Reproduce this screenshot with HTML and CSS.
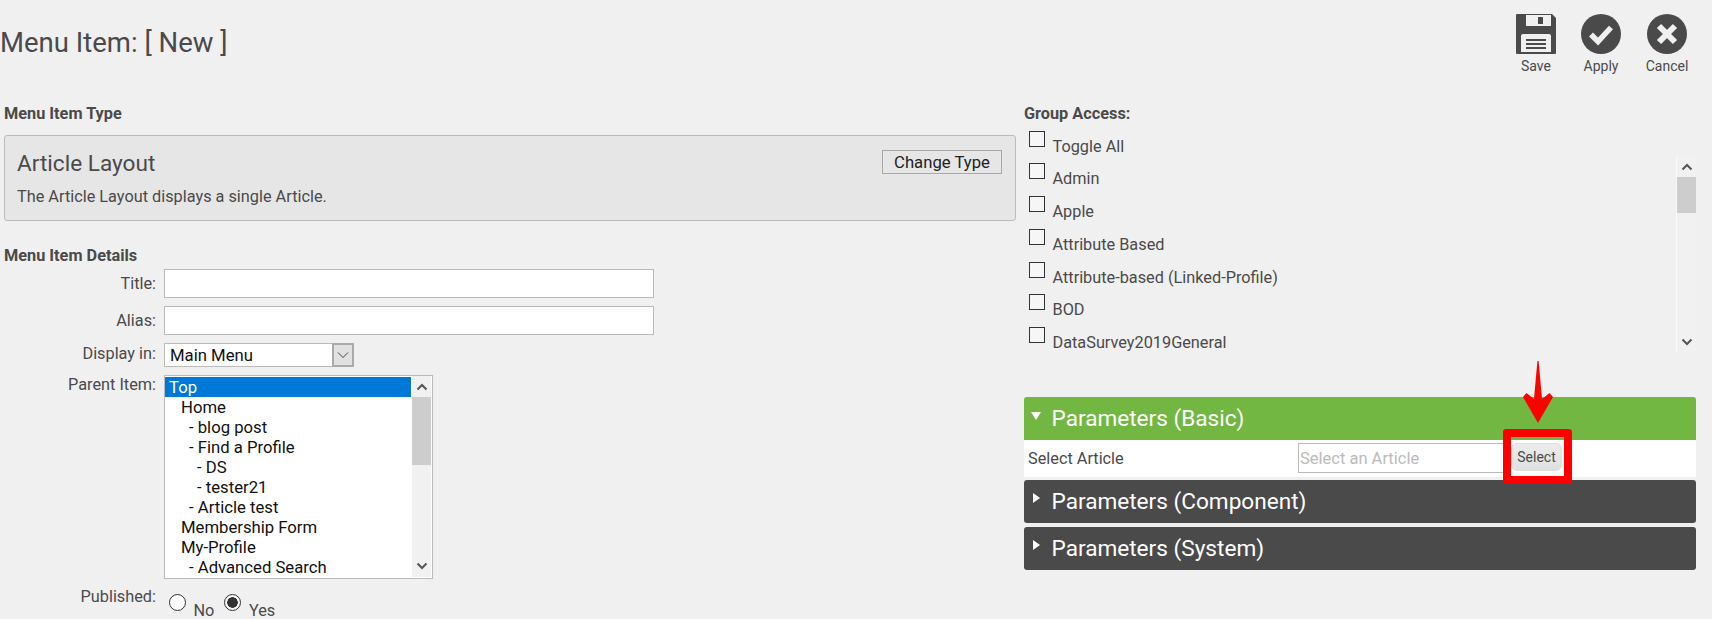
FILE: index.html
```html
<!DOCTYPE html>
<html lang="en">
<head>
  <meta charset="UTF-8">
  <title>Menu Item: [ New ]</title>
  <link rel="stylesheet" href="styles.css">
</head>
<body>

<header class="top">
  <h1>Menu Item: [ New ]</h1>
  <div class="toolbar">
    <a class="tool">
      <svg viewBox="0 0 40 40" width="40" height="40"><path fill="#4a4a4a" d="M1 0H36L40 4V39A1 1 0 0 1 39 40H1A1 1 0 0 1 0 39V1A1 1 0 0 1 1 0Z"/><path fill="#f0f0f0" d="M10 1H35V12H10Z"/><path fill="#4a4a4a" d="M22 3H27V10H22Z"/><path fill="#f0f0f0" d="M7 20H33A2 2 0 0 1 35 22V38H5V22A2 2 0 0 1 7 20Z"/><path fill="#4a4a4a" d="M10 25H30V27H10ZM10 29H30V31H10ZM10 33H30V35H10Z"/></svg>
      <span>Save</span>
    </a>
    <a class="tool">
      <svg viewBox="0 0 40 40" width="40" height="40"><circle cx="20" cy="20" r="20" fill="#4a4a4a"/><path fill="none" stroke="#f0f0f0" stroke-width="5.500" d="M10 20.500L17 27.500L30 13.500"/></svg>
      <span>Apply</span>
    </a>
    <a class="tool">
      <svg viewBox="0 0 40 40" width="40" height="40"><circle cx="20" cy="20" r="20" fill="#4a4a4a"/><path fill="none" stroke="#f0f0f0" stroke-width="6" d="M12 12L28 28M28 12L12 28"/></svg>
      <span>Cancel</span>
    </a>
  </div>
</header>

<main class="columns">
  <section class="left">
    <h4 class="sec first">Menu Item Type</h4>
    <div class="type-box">
      <div class="type-head">
        <h3>Article Layout</h3>
        <button class="change">Change Type</button>
      </div>
      <p>The Article Layout displays a single Article.</p>
    </div>

    <h4 class="sec details">Menu Item Details</h4>
    <div class="row r-title">
      <label>Title:</label>
      <input type="text" class="text-in">
    </div>
    <div class="row r-alias">
      <label>Alias:</label>
      <input type="text" class="text-in">
    </div>
    <div class="row r-display">
      <label>Display in:</label>
      <div class="fake-select">
        <span class="val">Main Menu</span>
        <span class="drop"><svg viewBox="0 0 12 8" width="12" height="8"><path fill="none" stroke="#444" d="M1 1.500L6 6.500L11 1.500"/></svg></span>
      </div>
    </div>
    <div class="row r-parent">
      <label>Parent Item:</label>
      <div class="listbox">
        <div class="options">
          <div class="opt sel">Top</div>
          <div class="opt l1">Home</div>
          <div class="opt l2">- blog post</div>
          <div class="opt l2">- Find a Profile</div>
          <div class="opt l3">- DS</div>
          <div class="opt l3">- tester21</div>
          <div class="opt l2">- Article test</div>
          <div class="opt l1">Membership Form</div>
          <div class="opt l1">My-Profile</div>
          <div class="opt l2">- Advanced Search</div>
        </div>
        <div class="sbar list-bar">
          <svg class="sb-up" viewBox="0 0 12 8" width="12" height="8"><path fill="none" stroke="#555" stroke-width="2" d="M1.500 6.500L6 2L10.500 6.500"/></svg>
          <div class="thumb"></div>
          <svg class="sb-down" viewBox="0 0 12 8" width="12" height="8"><path fill="none" stroke="#555" stroke-width="2" d="M1.500 1.500L6 6L10.500 1.500"/></svg>
        </div>
      </div>
    </div>
    <div class="row r-pub">
      <label>Published:</label>
      <div class="radios">
        <input type="radio" name="pub" class="radio"><span class="radio-text">No</span>
        <input type="radio" name="pub" class="radio" checked><span class="radio-text">Yes</span>
      </div>
    </div>
  </section>

  <section class="right">
    <h4 class="sec first">Group Access:</h4>
    <div class="check toggle"><input type="checkbox"><span>Toggle All</span></div>
    <div class="groups">
      <div class="group-list">
        <div class="check"><input type="checkbox"><span>Admin</span></div>
        <div class="check"><input type="checkbox"><span>Apple</span></div>
        <div class="check"><input type="checkbox"><span>Attribute Based</span></div>
        <div class="check short"><input type="checkbox"><span>Attribute-based (Linked-Profile)</span></div>
        <div class="check"><input type="checkbox"><span>BOD</span></div>
        <div class="check"><input type="checkbox"><span>DataSurvey2019General</span></div>
      </div>
      <div class="sbar group-bar">
        <svg class="sb-up" viewBox="0 0 12 8" width="12" height="8"><path fill="none" stroke="#555" stroke-width="2" d="M1.500 6.500L6 2L10.500 6.500"/></svg>
        <div class="thumb"></div>
        <svg class="sb-down" viewBox="0 0 12 8" width="12" height="8"><path fill="none" stroke="#555" stroke-width="2" d="M1.500 1.500L6 6L10.500 1.500"/></svg>
      </div>
    </div>

    <div class="panels">
      <div class="panel-head open"><i class="tri-down"></i>Parameters (Basic)</div>
      <div class="panel-body">
        <span class="pb-label">Select Article</span>
        <input type="text" class="article-in" placeholder="Select an Article">
        <div class="select-wrap">
          <button class="select-btn">Select</button>
          <div class="red-box"></div>
          <svg class="red-arrow" viewBox="0 0 32 62" width="32" height="62"><path fill="#f00" d="M15.400 0H16.600L20 38L27.500 32L31 36L16 62L1 36L4.500 32L12 38Z"/></svg>
        </div>
      </div>
      <div class="panel-head"><i class="tri-right"></i>Parameters (Component)</div>
      <div class="panel-head"><i class="tri-right"></i>Parameters (System)</div>
    </div>
  </section>
</main>

</body>
</html>
```

FILE: styles.css
```css
* {
  box-sizing: border-box;
}

html, body {
  height: 619px;
  overflow: hidden;
}

body {
  margin: 0;
  background-color: #f0f0f0;
  color: #4a4a4a;
  font-family: Roboto, "Liberation Sans", sans-serif;
  font-size: 16.3px;
}

.top {
  display: flex;
  justify-content: space-between;
  height: 94px;
  padding: 14px 25px 0 0;
}

h1 {
  margin: 12px 0 0;
  font-size: 27.5px;
  line-height: 34px;
  font-weight: 400;
}

.toolbar {
  display: flex;
  gap: 26px;
}

.tool {
  display: flex;
  flex-direction: column;
  align-items: center;
  width: 40px;
  font-size: 14px;
  white-space: nowrap;
}

.tool:first-child {
  margin-right: -1px;
}

.tool span {
  margin-top: 4px;
  line-height: 16px;
}

.columns {
  display: grid;
  grid-template-columns: 1012px 672px;
  gap: 8px;
  padding-left: 4px;
}

.sec {
  margin: 0;
  font-size: 16.3px;
  line-height: 20px;
  font-weight: bold;
}

.first {
  margin-top: 10px;
}

/* tipo do item */
.type-box {
  height: 86px;
  margin-top: 11px;
  padding: 15px 13px 0 12px;
  background: #e6e6e6;
  border: 1px solid #bbb;
  border-radius: 3px;
}

.type-head {
  display: flex;
  justify-content: space-between;
  align-items: flex-start;
}

.type-head h3 {
  margin: 0;
  font-size: 22.6px;
  line-height: 26px;
  font-weight: 400;
}

.change {
  height: 24px;
  width: 120px;
  margin: -1px 0 0;
  padding: 0;
  background: #e6e6e6;
  border: 1.5px solid #a9a9a9;
  color: #222;
  font-family: inherit;
  font-size: 16.7px;
}

.type-box p {
  margin: 10px 0 0;
  line-height: 20px;
}

.details {
  margin-top: 25px;
}

.row {
  display: flex;
  align-items: flex-start;
}

.row label {
  flex: none;
  width: 152px;
  text-align: right;
  line-height: 20px;
}

.row > label + * {
  margin-left: 8px;
}

.r-title {
  margin-top: 3px;
}

.r-title label, .r-alias label {
  margin-top: 5px;
}

.r-alias {
  margin-top: 8px;
}

.r-display {
  margin-top: 8px;
}

.r-display label {
  margin-top: 1px;
}

.r-parent {
  margin-top: 8px;
}

.r-pub {
  margin-top: 7px;
}

.r-pub label {
  margin-top: 1px;
}

.text-in {
  width: 490px;
  height: 29px;
  background: #fff;
  border: 1px solid #bbb;
  padding: 0 4px;
}

.fake-select {
  display: flex;
  justify-content: space-between;
  width: 190px;
  height: 24px;
  background: #fff;
  border: 1px solid #bbb;
}

.fake-select .val {
  padding-left: 5px;
  color: #111;
  font-size: 16.7px;
  line-height: 23px;
}

.drop {
  display: flex;
  align-items: center;
  justify-content: center;
  width: 22px;
  margin: -1px -1px -1px 0;
  background: #e1e1e1;
  border: 2px solid #aaa;
}

/* lista do parent item */
.listbox {
  display: flex;
  width: 269px;
  height: 204px;
  background: #fff;
  border: 1px solid #bbb;
  padding-top: 1px;
}

.options {
  width: 246px;
  flex: none;
}

.opt {
  height: 20px;
  color: #111;
  font-size: 16.7px;
  line-height: 21px;
  white-space: nowrap;
}

.opt.sel {
  padding-left: 4px;
  background: #0078d7;
  color: #fff;
}

.l1 { padding-left: 16px; }
.l2 { padding-left: 24px; }
.l3 { padding-left: 32px; }

.sbar {
  display: flex;
  flex-direction: column;
  align-items: center;
  flex: none;
  background: #f1f1f1;
}

.sbar svg {
  flex: none;
}

.list-bar {
  width: 19px;
  height: 201px;
  margin-left: 1px;
  margin-top: -1px;
}

.list-bar .sb-up {
  margin-top: 7px;
}

.list-bar .thumb {
  width: 19px;
  height: 68px;
  margin-top: 6px;
  background: #cdcdcd;
}

.list-bar .sb-down {
  margin-top: auto;
  margin-bottom: 7px;
}

.radios {
  display: flex;
  align-items: flex-start;
  padding-left: 5px;
}

.radio {
  appearance: none;
  width: 17px;
  height: 17px;
  margin: 8px 7.5px 0 0;
  background: #fff;
  border: 1px solid #333;
  border-radius: 50%;
}

.radio:checked {
  background: radial-gradient(circle, #333 0, #333 5px, #f6f6f6 5.500px);
}

.radio-text {
  margin-top: 15px;
  margin-right: 10px;
  line-height: 20px;
}

/* grupos */
.check {
  display: flex;
  align-items: flex-start;
  height: 33px;
  padding-left: 5px;
}

.check.short {
  height: 32px;
}

.check input {
  appearance: none;
  width: 16px;
  height: 16px;
  margin: 0 7.5px 0 0;
  background: #f6f6f6;
  border: 1px solid #333;
}

.check span {
  margin-top: 6px;
  line-height: 20px;
}

.check.toggle {
  margin-top: 7px;
  height: 25px;
}

.groups {
  display: flex;
  justify-content: space-between;
  height: 197px;
}

.group-list {
  padding-top: 7px;
}

.group-bar {
  width: 20px;
  border-left: 1px solid #fafafa;
}

.group-bar .sb-up {
  margin-top: 7px;
}

.group-bar .thumb {
  width: 19px;
  height: 36px;
  margin-top: 6px;
  background: #cdcdcd;
}

.group-bar .sb-down {
  margin-top: auto;
  margin-bottom: 7px;
}

/* parametros */
.panels {
  margin-top: 44px;
}

.panel-head {
  display: flex;
  align-items: center;
  position: relative;
  height: 43px;
  margin-bottom: 4px;
  padding-left: 27.5px;
  background: #4a4a4a;
  border-radius: 3px;
  color: #fff;
  font-size: 22.6px;
  font-weight: 400;
}

.panel-head.open {
  margin-bottom: 0;
  background: #72b741;
  border-radius: 3px 3px 0 0;
}

.tri-down, .tri-right {
  position: absolute;
  width: 0;
  height: 0;
}

.tri-down {
  left: 7px;
  top: 15px;
  border-left: 5px solid transparent;
  border-right: 5px solid transparent;
  border-top: 8px solid #fff;
}

.tri-right {
  left: 9px;
  top: 13px;
  border-top: 5px solid transparent;
  border-bottom: 5px solid transparent;
  border-left: 7px solid #fff;
}

.panel-body {
  display: flex;
  align-items: flex-start;
  height: 37px;
  margin-bottom: 3px;
  padding: 3px 0 0 4px;
  background: #fff;
}

.pb-label {
  flex: none;
  width: 270px;
  margin-top: 6px;
  line-height: 20px;
}

.article-in {
  width: 213px;
  height: 30px;
  padding: 0 1px;
  background: #fff;
  border: 1px solid #bbb;
  border-right: 0;
  font-family: inherit;
  font-size: 16.5px;
}

.article-in::placeholder {
  color: #bbb;
}

.select-wrap {
  position: relative;
  z-index: 1;
}

.select-btn {
  width: 51px;
  height: 28px;
  padding: 0;
  background: linear-gradient(#ececec, #e0e0e0);
  border: 1px solid #ddd;
  border-radius: 6px;
  color: #4a4a4a;
  font-family: inherit;
  font-size: 14px;
}

.red-box {
  position: absolute;
  left: -8px;
  top: -14px;
  width: 69px;
  height: 55px;
  border: 8px solid #f00;
  border-radius: 3px;
}

.red-arrow {
  position: absolute;
  left: 11px;
  top: -82px;
}
```
